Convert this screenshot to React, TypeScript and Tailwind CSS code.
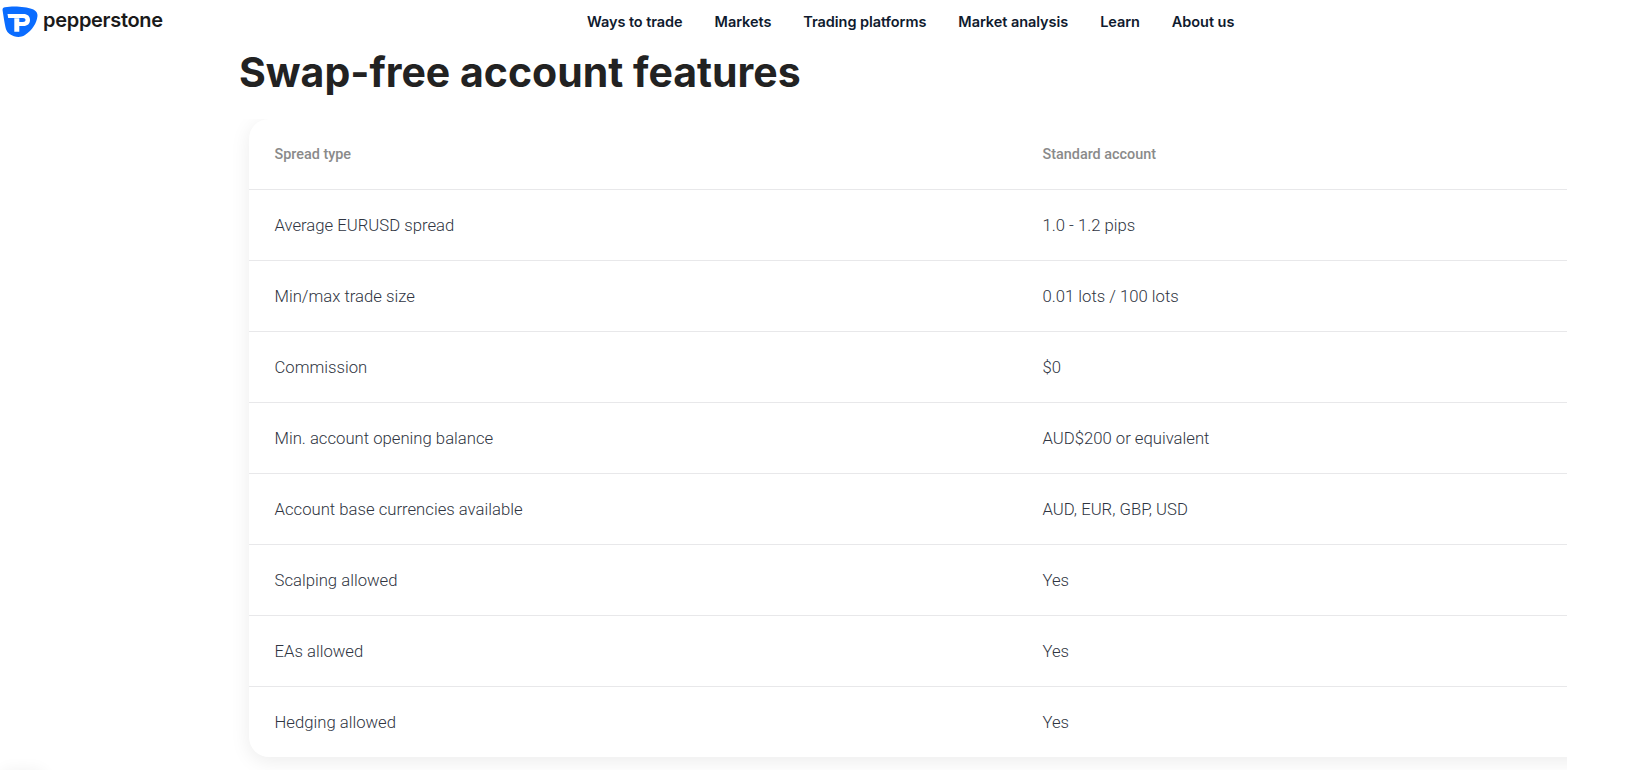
export default function App() {
  const nav = ["Ways to trade", "Markets", "Trading platforms", "Market analysis", "Learn", "About us"];
  const rows = [
    ["Average EURUSD spread", "1.0 - 1.2 pips"],
    ["Min/max trade size", "0.01 lots / 100 lots"],
    ["Commission", "$0"],
    ["Min. account opening balance", "AUD$200 or equivalent"],
    ["Account base currencies available", "AUD, EUR, GBP, USD"],
    ["Scalping allowed", "Yes"],
    ["EAs allowed", "Yes"],
    ["Hedging allowed", "Yes"],
  ];
  return (
    <div className="relative w-[1646px] h-[770px] overflow-hidden bg-white font-['Roboto',sans-serif]">
      <header className="flex h-[44px] items-start">
        <div className="flex items-center pl-[2px] pt-[6px] w-[587px]">
          <svg width="36" height="32" viewBox="0 0 36 32" className="shrink-0">
            <path d="M3 1.2 C11 -0.4 24 0.5 30 3 C34.5 4.8 35.8 7 35.4 10.5 C34.6 17 30.5 24 23 29 C19 31.6 15 31.2 12 30.2 C7.5 28.6 4.6 26.5 3.4 21 C2.3 15.5 1.2 8.5 0.6 4.5 C0.3 2.5 1.2 1.5 3 1.2 Z" fill="#0A6CFF" />
            <path d="M5.5 8 H21.5 C25.5 8 28 10.3 28 14 C28 17.7 25.5 20 21.5 20 H17.3 V25.7 H12.3 V12.3 H17.3 V16 H21 C22.6 16 23.5 15.2 23.5 14 C23.5 12.8 22.6 12 21 12 H6.2 Z" fill="#fff" />
          </svg>
          <span className="ml-[5px] -mt-[5px] font-['Inter',sans-serif] text-[20px] font-semibold leading-none tracking-[-0.3px] text-[#1a1a1a]">pepperstone</span>
        </div>
        <nav className="flex gap-[32px] pt-[13px] font-['Inter',sans-serif] text-[14.5px] font-semibold leading-[18px] tracking-[-0.06px] text-[#0f1a2e]">
          {nav.map((n) => <a key={n}>{n}</a>)}
        </nav>
      </header>
      <main className="pl-[239px] w-[1567px]">
        <h1 className="font-['Inter',sans-serif] text-[41px] font-bold leading-[56px] text-[#222222] h-[75px]">Swap-free account features</h1>
        <div className="-ml-[239px] pl-[249px] pb-[13px] overflow-hidden">
          <div className="w-[1500px] rounded-[20px] bg-white shadow-[0_4px_20px_rgba(0,0,0,0.08)]">
            <div className="flex h-[71px] items-center border-b border-[#e8e8ea] pl-[25.5px] pt-[1px] text-[14.4px] font-medium text-[#8a8a8a]">
              <div className="w-[768px]">Spread type</div>
              <div>Standard account</div>
            </div>
            {rows.map(([a, b], i) => (
              <div key={a} className={`flex items-center pl-[25.5px] pt-[1px] text-[16.7px] font-light text-[#2f3542] ${i < rows.length - 1 ? "h-[71px] border-b border-[#e8e8ea]" : "h-[70px]"}`}>
                <div className="w-[768px]">{a}</div>
                <div>{b}</div>
              </div>
            ))}
          </div>
        </div>
      </main>
      <div className="absolute left-0 bottom-[-18px] h-[18px] w-[45px] rounded-full shadow-[0_0_16px_rgba(0,0,0,0.06)]" />
    </div>
  );
}
